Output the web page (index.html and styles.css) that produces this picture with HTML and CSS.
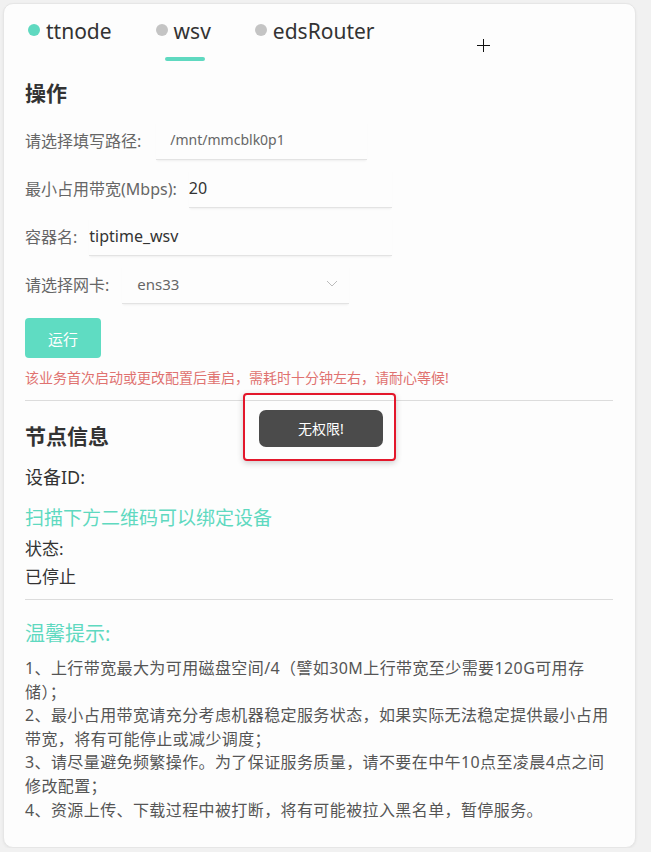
FILE: index.html
```html
<!DOCTYPE html>
<html lang="zh-CN">
<head>
    <meta charset="UTF-8">
    <title>节点管理</title>
    <link rel="stylesheet" href="styles.css">
</head>
<body>
    <div class="card">
        <div class="tabs">
            <div class="tab"><span class="dot dot-on"></span>ttnode</div>
            <div class="tab tab-active"><span class="dot"></span>wsv</div>
            <div class="tab"><span class="dot"></span>edsRouter</div>
        </div>

        <div class="section">
            <h3 class="title">操作</h3>
            <div class="field">
                <label class="label">请选择填写路径:</label>
                <input class="input input-path" type="text" value="/mnt/mmcblk0p1">
            </div>
            <div class="field">
                <label class="label">最小占用带宽(Mbps):</label>
                <input class="input input-bw" type="text" value="20">
            </div>
            <div class="field">
                <label class="label">容器名:</label>
                <input class="input input-name" type="text" value="tiptime_wsv">
            </div>
            <div class="field">
                <label class="label">请选择网卡:</label>
                <div class="select">
                    <span>ens33</span>
                    <svg width="12" height="7" viewBox="0 0 12 7"><path d="M1 1 L6 6 L11 1" fill="none" stroke="#bcbcbc" stroke-width="1"/></svg>
                </div>
            </div>
            <button type="button" class="run-btn">运行</button>
            <p class="warn">该业务首次启动或更改配置后重启，需耗时十分钟左右，请耐心等候!</p>
        </div>

        <hr class="line">

        <div class="section">
            <h3 class="title title-node">节点信息</h3>
            <div class="info">设备ID:</div>
            <div class="scan">扫描下方二维码可以绑定设备</div>
            <div class="status status-first">状态:</div>
            <div class="status">已停止</div>
        </div>

        <hr class="line line-tips">

        <div class="section">
            <div class="tips-title">温馨提示:</div>
            <div class="tips">
                <p>1、上行带宽最大为可用磁盘空间/4（譬如30M上行带宽至少需要120G可用存<br>储）；</p>
                <p>2、最小占用带宽请充分考虑机器稳定服务状态，如果实际无法稳定提供最小占用<br>带宽，将有可能停止或减少调度；</p>
                <p>3、请尽量避免频繁操作。为了保证服务质量，请不要在中午10点至凌晨4点之间<br>修改配置；</p>
                <p>4、资源上传、下载过程中被打断，将有可能被拉入黑名单，暂停服务。</p>
            </div>
        </div>

        <!-- toast + highlight box lie over the page -->
        <div class="toast">无权限!</div>
        <div class="mark"></div>
        <div class="cursor"></div>
    </div>
</body>
</html>
```

FILE: styles.css
```css
body {
    margin: 0;
    background-color: #f1f1f1;
    font-family: "Noto Sans", "Noto Sans CJK SC", sans-serif;
    color: #333;
}
.card {
    position: relative;
    box-sizing: border-box;
    width: 633px;
    height: 845px;
    margin: 3px 0 0 3px;
    padding: 13px 22px 0 21px;
    background-color: #fdfdfd;
    border: 1px solid #e6e6e6;
    border-radius: 10px;
    box-shadow: 0 1px 3px rgba(0,0,0,0.06);
}
.tabs {
    display: flex;
    gap: 44px;
    margin-left: 3px;
}
.tab {
    position: relative;
    display: flex;
    align-items: center;
    gap: 6px;
    padding-bottom: 15px;
    font-size: 21px;
    line-height: 28px;
    color: #333;
}
.tab-active::after {
    content: "";
    position: absolute;
    left: 50%;
    bottom: -1px;
    width: 40px;
    height: 4px;
    margin-left: -18px;
    border-radius: 2px;
    background-color: #5fd9c0;
}
.dot {
    width: 12px;
    height: 12px;
    border-radius: 50%;
    background-color: #c4c4c4;
    margin-top: -3px;
}
.dot-on {
    background-color: #5fd9c0;
}
.title {
    margin: 18px 0 12px;
    font-size: 21px;
    line-height: 30px;
    font-weight: bold;
    color: #333;
}
.title-node {
    margin: 20px 0 13px;
}
.field {
    display: flex;
    align-items: center;
    height: 40px;
    margin-bottom: 8px;
}
.label {
    font-size: 16px;
    color: #666;
    margin-right: 12px;
    white-space: nowrap;
}
.input {
    box-sizing: border-box;
    height: 40px;
    padding: 0;
    border: none;
    border-bottom: 1px solid #e3e3e3;
    box-shadow: 0 2px 2px -1px rgba(0,0,0,0.06);
    background: transparent;
    font-family: "Noto Sans", "Noto Sans CJK SC", sans-serif;
    font-size: 16px;
    color: #333;
    outline: none;
}
.input-path {
    width: 211px;
    margin-left: 3px;
    padding-left: 14px;
    font-size: 14px;
    color: #666;
}
.input-bw {
    width: 203px;
}
.input-name {
    width: 303px;
}
.select {
    box-sizing: border-box;
    display: flex;
    align-items: center;
    justify-content: space-between;
    width: 227px;
    height: 40px;
    margin-left: 1px;
    padding: 0 11px 0 15px;
    border-bottom: 1px solid #e3e3e3;
    box-shadow: 0 2px 2px -1px rgba(0,0,0,0.06);
    font-size: 15px;
    color: #666;
}
.run-btn {
    display: block;
    width: 76px;
    height: 40px;
    margin-top: 14px;
    border: none;
    border-radius: 4px;
    background-color: #5fdcc2;
    color: white;
    font-family: "Noto Sans", "Noto Sans CJK SC", sans-serif;
    font-size: 15px;
    cursor: pointer;
}
.warn {
    margin: 10px 0 0;
    font-size: 14px;
    line-height: 20px;
    color: #e07270;
}
.line {
    margin: 12px 0 0;
    border: none;
    border-top: 1px solid #dcdcdc;
}
.line-tips {
    margin-top: 8px;
}
.info {
    font-size: 18px;
    line-height: 26px;
    color: #333;
}
.scan {
    margin-top: 14px;
    font-size: 19px;
    line-height: 28px;
    color: #5fd9c0;
}
.status {
    font-size: 17px;
    line-height: 28px;
    color: #333;
}
.status-first {
    margin-top: 3px;
}
.tips-title {
    margin-top: 19px;
    font-size: 20px;
    line-height: 30px;
    color: #5fd9c0;
}
.tips {
    margin-top: 8px;
    font-size: 16px;
    line-height: 23.6px;
    color: #555;
    letter-spacing: 0.4px;
}
.tips p {
    margin: 0;
    white-space: nowrap;
}
.toast {
    position: absolute;
    left: 255px;
    top: 406px;
    width: 124px;
    height: 37px;
    border-radius: 7px;
    background-color: #4b4b4b;
    color: #fff;
    font-size: 14px;
    line-height: 37px;
    text-align: center;
}
.mark {
    position: absolute;
    left: 239px;
    top: 389px;
    width: 149px;
    height: 64px;
    border: 2px solid #e3172b;
    border-radius: 4px;
    box-shadow: 0 2px 6px rgba(0,0,0,0.2);
}
.cursor {
    position: absolute;
    left: 473px;
    top: 35px;
    width: 13px;
    height: 13px;
    background:
        linear-gradient(#111, #111) center / 1px 100% no-repeat,
        linear-gradient(#111, #111) center / 100% 1px no-repeat;
}
```
